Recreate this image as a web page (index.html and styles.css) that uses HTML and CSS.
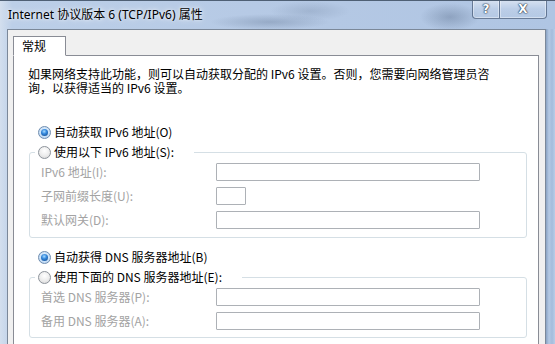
FILE: index.html
```html
<!DOCTYPE html>
<html lang="zh-CN">
<head>
<meta charset="utf-8">
<title>Internet 协议版本 6 (TCP/IPv6) 属性</title>
<link rel="stylesheet" href="styles.css">
</head>
<body>
<div class="window">
  <div class="titlebar">
    <span class="title">Internet 协议版本 6 (TCP/IPv6) 属性</span>
    <div class="caption-buttons">
      <span class="cbtn help">?</span>
      <span class="cbtn close">X</span>
    </div>
  </div>
  <div class="frame">
    <div class="client">
      <div class="tabs"><div class="tab active">常规</div></div>
      <div class="panel">
        <p class="intro">如果网络支持此功能，则可以自动获取分配的 IPv6 设置。否则，您需要向网络管理员咨<br>询，以获得适当的 IPv6 设置。</p>

        <div class="radio-row first"><span class="radio checked"></span><span class="rlabel">自动获取 IPv6 地址(O)</span></div>
        <fieldset class="group">
          <legend class="radio-row legend"><span class="radio"></span><span class="rlabel">使用以下 IPv6 地址(S):</span></legend>
          <div class="fields">
            <span class="flabel">IPv6 地址(I):</span><span class="input wide"></span>
            <span class="flabel">子网前缀长度(U):</span><span class="input narrow"></span>
            <span class="flabel">默认网关(D):</span><span class="input wide"></span>
          </div>
        </fieldset>

        <div class="radio-row second"><span class="radio checked"></span><span class="rlabel">自动获得 DNS 服务器地址(B)</span></div>
        <fieldset class="group dns">
          <legend class="radio-row legend"><span class="radio"></span><span class="rlabel">使用下面的 DNS 服务器地址(E):</span></legend>
          <div class="fields">
            <span class="flabel">首选 DNS 服务器(P):</span><span class="input wide"></span>
            <span class="flabel">备用 DNS 服务器(A):</span><span class="input wide"></span>
          </div>
        </fieldset>
      </div>
    </div>
  </div>
</div>
</body>
</html>
```
FILE: styles.css
```css
html, body {
  margin: 0;
  padding: 0;
}
body {
  width: 555px;
  height: 344px;
  overflow: hidden;
  font-family: "Noto Sans CJK SC", sans-serif;
  font-size: 12px;
  color: #000;
}
.window {
  width: 555px;
  height: 344px;
  display: flex;
  flex-direction: column;
  overflow: hidden;
  background:
    radial-gradient(ellipse 60px 8px at 270px 21px, rgba(70, 90, 120, 0.28), rgba(70, 90, 120, 0) 100%),
    radial-gradient(ellipse 40px 10px at 310px 10px, rgba(70, 90, 120, 0.18), rgba(70, 90, 120, 0) 100%),
    radial-gradient(ellipse 30px 14px at 450px 16px, rgba(60, 80, 110, 0.30), rgba(60, 80, 110, 0) 100%),
    linear-gradient(to right, #d3dfee 0px, #bccfe8 12px, #b4c8e4 60%, #afc5e3 100%);
  border-top: 1px solid #4f6075;
  box-sizing: border-box;
}
.titlebar {
  height: 28px;
  display: flex;
  align-items: flex-start;
  justify-content: space-between;
  flex: none;
}
.title {
  font-family: "Noto Sans", "Noto Sans CJK SC", sans-serif;
  font-size: 12px;
  line-height: 16px;
  margin: 6px 0 0 8px;
  color: #000;
  text-shadow: 0 0 6px rgba(255, 255, 255, 0.85), 0 0 3px rgba(255, 255, 255, 0.7);
}
.caption-buttons {
  display: flex;
  margin-right: 8px;
  margin-top: -1px;
}
.cbtn {
  height: 19px;
  box-sizing: border-box;
  display: flex;
  align-items: center;
  justify-content: center;
  font-family: "DejaVu Sans", sans-serif;
  font-weight: bold;
  font-size: 12px;
  color: #fff;
  text-shadow: 0 0 1px #2a3a50, 0 0 1px #2a3a50, 0 0 2px #2a3a50;
  background: linear-gradient(to bottom, rgba(255, 255, 255, 0.5), rgba(255, 255, 255, 0.15) 50%, rgba(190, 208, 232, 0.35));
  border: 1px solid rgba(70, 90, 120, 0.75);
  border-top: none;
  box-shadow: inset 0 0 0 1px rgba(255, 255, 255, 0.4);
}
.cbtn.help {
  width: 28px;
  border-radius: 0 0 0 4px;
}
.cbtn.close {
  width: 47px;
  border-left: none;
  border-radius: 0 0 4px 0;
}
.frame {
  flex: 1;
  display: flex;
  padding: 0 9px 0 7px;
  min-height: 0;
  background: linear-gradient(to right, transparent 546px, #8aa3c4 546px, #b4c9e4 549px, #a4bcdc 552px, #b9cde7 555px);
}
.client {
  flex: 1;
  display: flex;
  flex-direction: column;
  background: #f0f0f0;
  border: 1px solid #7b8899;
  border-bottom: none;
  padding: 6px 6px 0 5px;
  min-height: 0;
}
.tabs {
  display: flex;
  flex: none;
}
.tab {
  position: relative;
  z-index: 1;
  height: 18px;
  line-height: 18px;
  padding: 0 19px 0 8px;
  background: #fff;
  border: 1px solid #898c95;
  border-bottom: 1px solid #fff;
  margin-bottom: -1px;
}
.panel {
  flex: 1;
  background: #fff;
  border: 1px solid #898c95;
  border-bottom: none;
  padding: 11px 0 0 14px;
  display: flex;
  flex-direction: column;
  align-items: stretch;
}
.intro {
  margin: 0;
  line-height: 14px;
}
.radio-row {
  display: flex;
  align-items: center;
  height: 16px;
  line-height: 16px;
  white-space: nowrap;
}
.radio-row.first {
  margin-top: 29px;
  padding-left: 10px;
}
.radio-row.second {
  margin-top: 11px;
  padding-left: 10px;
}
.radio {
  width: 13px;
  height: 13px;
  box-sizing: border-box;
  border-radius: 50%;
  border: 1px solid #8d939b;
  background: radial-gradient(circle at 50% 35%, #ffffff 0%, #ececec 55%, #d2d2d2 100%);
  display: inline-flex;
  align-items: center;
  justify-content: center;
  flex: none;
  margin-right: 3px;
}
.radio.checked {
  border-color: #6f8db0;
  background: radial-gradient(circle at 50% 40%, #e8f3ff 0%, #c3dcf5 70%, #9cbde0 100%);
}
.radio.checked::after {
  content: "";
  width: 7px;
  height: 7px;
  border-radius: 50%;
  background: radial-gradient(circle at 45% 35%, #a7dcff 0%, #3488dd 40%, #0c3f80 100%);
}
.group {
  margin: 4px 11px 0 1px;
  padding: 0 0 8px 0;
  border: 1px solid #d5dfe5;
  border-radius: 3px;
  min-width: 0;
}
.group.dns {
  padding-bottom: 7px;
}
.legend {
  margin-left: 5px;
  padding: 0 20px 0 3px;
  background: #fff;
}
.fields {
  display: grid;
  grid-template-columns: 175px auto;
  row-gap: 6px;
  align-items: center;
  padding: 3px 0 0 11px;
}
.flabel {
  color: #a3a3a3;
  line-height: 16px;
  white-space: nowrap;
}
.input {
  display: block;
  height: 18px;
  box-sizing: border-box;
  border: 1px solid #adb1b6;
  border-radius: 1px;
  background: #fff;
}
.input.wide {
  width: 264px;
}
.input.narrow {
  width: 30px;
}
```
